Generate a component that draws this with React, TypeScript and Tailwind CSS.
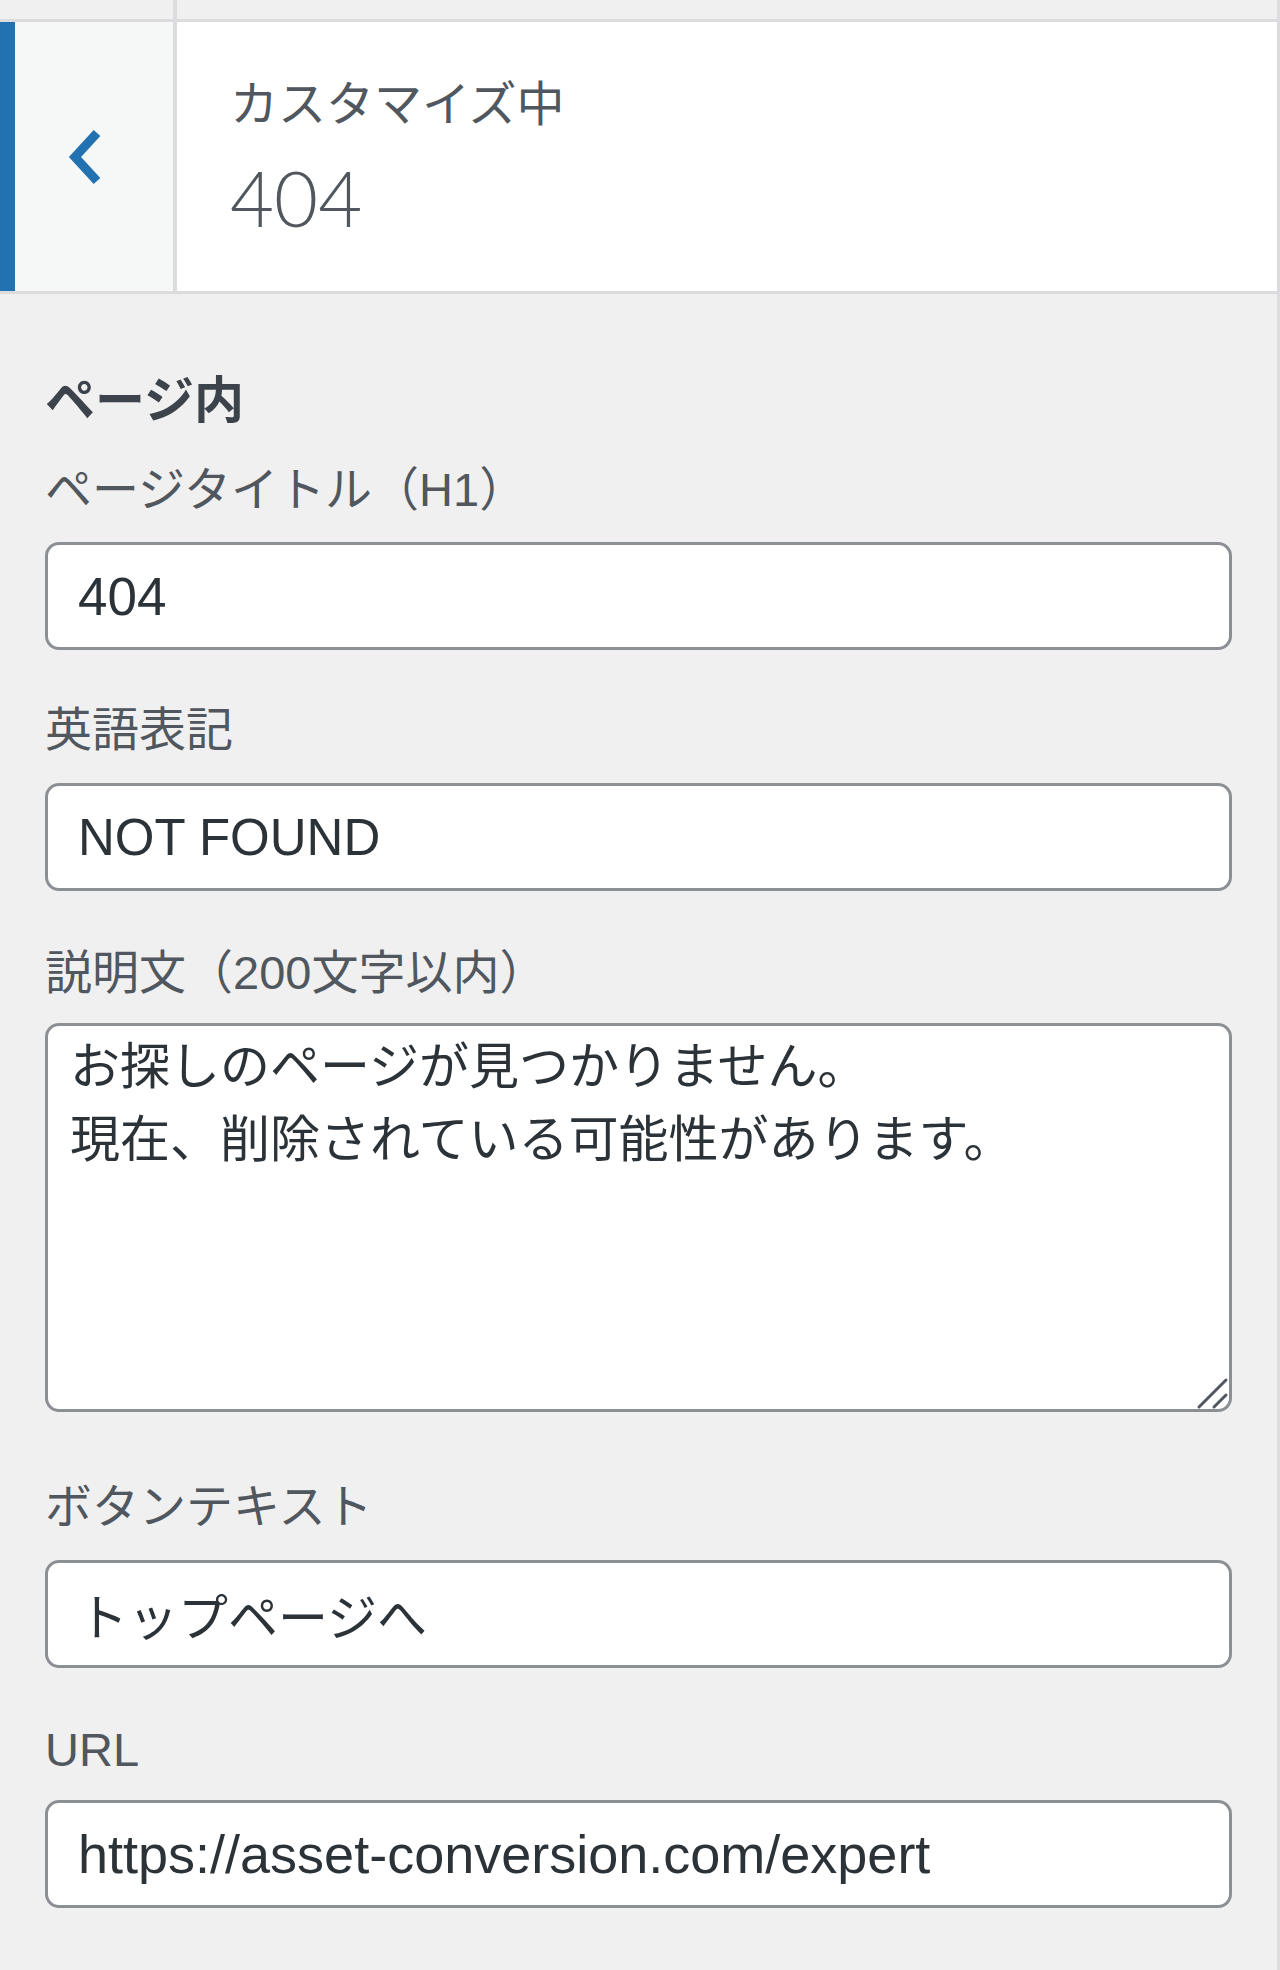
import React from "react";

const labelCls = "block text-[47px] leading-[56px] text-[#50575e]";
const inputCls =
  "block w-full h-[108px] rounded-[14px] border-[3px] border-[#8c8f94] bg-white px-[30px] text-[#2c3338] outline-none";

const fields = [
  { label: "ページタイトル（H1）", value: "404", labelGap: "mt-[36px]", inputGap: "mt-[24px]", size: "text-[53px]" },
  { label: "英語表記", value: "NOT FOUND", labelGap: "mt-[52px]", inputGap: "mt-[25px]", size: "text-[51px]" },
];

const fieldsAfter = [
  { label: "ボタンテキスト", value: "トップページへ", labelGap: "mt-[67px]", inputGap: "mt-[25px]", size: "text-[50px]" },
  { label: "URL", value: "https://asset-conversion.com/expert", labelGap: "mt-[54px]", inputGap: "mt-[22px]", size: "text-[54px]" },
];

function Field({ f }: { f: (typeof fields)[number] }) {
  return (
    <>
      <label className={`${labelCls} ${f.labelGap}`}>{f.label}</label>
      <input readOnly defaultValue={f.value} className={`${inputCls} ${f.inputGap} ${f.size}`} />
    </>
  );
}

export default function App() {
  return (
    <div className="min-h-[1970px] w-[1280px] border-r-[3px] border-[#dcdcde] bg-[#f0f0f1] font-['Liberation_Sans','Noto_Sans_CJK_JP',sans-serif]">
      {/* strip above the header */}
      <div className="flex h-[19px]">
        <div className="w-[173px]" />
        <div className="border-l-[4px] border-[#dcdcde]" />
      </div>

      {/* customize info header */}
      <div className="flex h-[275px] border-y-[3px] border-[#dcdcde] bg-white">
        <div className="w-[15px] bg-[#2271b1]" />
        <div className="flex w-[162px] items-center border-r-[4px] border-[#dcdcde] bg-[#f6f7f7] pl-[53px]">
          <svg width="34" height="58" viewBox="0 0 34 58" fill="none">
            <polyline points="29,5 7,29 29,53" stroke="#2271b1" strokeWidth="9" strokeLinejoin="miter" />
          </svg>
        </div>
        <div className="flex flex-col pl-[53px] pt-[48px] text-[#50575e]">
          <span className="text-[48px] leading-[60px] font-['Noto_Sans_CJK_JP',sans-serif]">カスタマイズ中</span>
          <span className="mt-[23px] text-[76px] leading-[90px] font-light font-['Lato',sans-serif]">404</span>
        </div>
      </div>

      <div className="px-[45px] pt-[72px]">
        <h2 className="text-[50px] leading-[60px] font-bold text-[#3c434a] font-['Noto_Sans_CJK_JP',sans-serif]">
          ページ内
        </h2>

        {fields.map((f) => (
          <Field key={f.label} f={f} />
        ))}

        <label className={`${labelCls} mt-[54px]`}>説明文（200文字以内）</label>
        <div className="relative mt-[22px]">
          <textarea
            readOnly
            defaultValue={"お探しのページが見つかりません。\n現在、削除されている可能性があります。"}
            className="block h-[389px] w-full resize-none rounded-[14px] border-[3px] border-[#8c8f94] bg-white px-[22px] pt-[5px] text-[50px] leading-[73px] text-[#2c3338] outline-none"
          />
          <svg className="absolute bottom-0 right-0" width="40" height="40" viewBox="0 0 40 40">
            <line x1="7" y1="35" x2="34" y2="8" stroke="#50575e" strokeWidth="3" strokeLinecap="round" />
            <line x1="22" y1="35" x2="34" y2="23" stroke="#50575e" strokeWidth="3" strokeLinecap="round" />
          </svg>
        </div>

        {fieldsAfter.map((f) => (
          <Field key={f.label} f={f} />
        ))}
      </div>
    </div>
  );
}
